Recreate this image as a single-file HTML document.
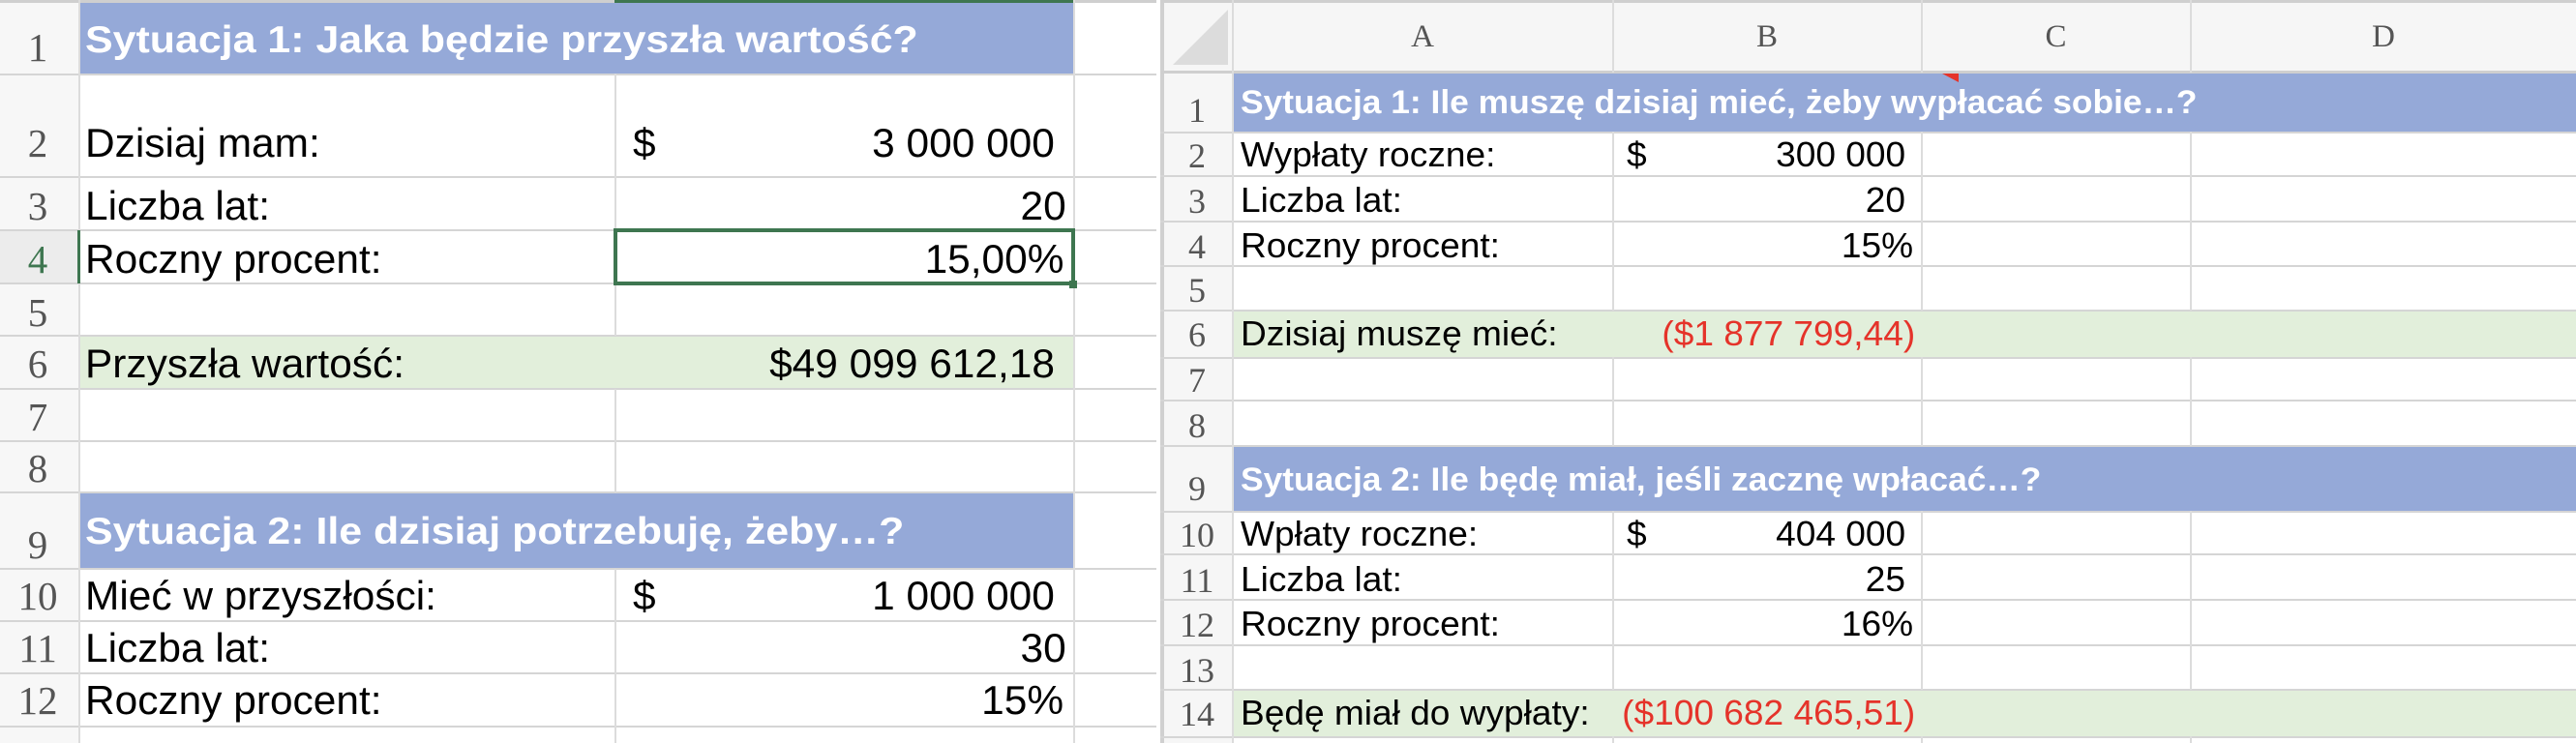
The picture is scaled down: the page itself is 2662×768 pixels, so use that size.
<!DOCTYPE html>
<html><head><meta charset="utf-8"><style>
*{margin:0;padding:0;box-sizing:border-box}
body{width:2662px;height:768px;overflow:hidden;background:#fff;position:relative;font-family:"Liberation Sans",Arial,sans-serif}
div{position:absolute}
.h{height:2px;background:#d5d5d5}
.v{width:2px;background:#dcdcdc}
.t{white-space:nowrap;line-height:1;color:#000}
.L{font-size:42px;transform:scaleX(1.01);transform-origin:left}
.LR{font-size:42px;transform:scaleX(1.01);transform-origin:right;text-align:right}
.R{font-size:36px;transform:scaleX(1.03);transform-origin:left}
.RR{font-size:36px;transform:scaleX(1.03);transform-origin:right;text-align:right}
.n{font-family:"Liberation Serif",serif;color:#555;text-align:center;line-height:1;white-space:nowrap}
.hd{font-weight:bold;color:#fff;white-space:nowrap;line-height:1}
.red{color:#e5332a}
</style></head><body>
<!-- LEFT SHEET -->
<div style="left:0;top:0;width:82px;height:768px;background:#f7f7f7"></div>
<div style="left:0;top:0;width:1195px;height:3px;background:#cfcfcf"></div>
<div style="left:635px;top:0;width:474px;height:4px;background:#3e7650"></div>
<div style="left:0;top:238px;width:82px;height:55px;background:#ececec"></div>
<div style="left:82px;top:3px;width:1027px;height:73px;background:#95a9d8"></div>
<div style="left:82px;top:509px;width:1027px;height:79px;background:#95a9d8"></div>
<div style="left:82px;top:347px;width:1027px;height:55px;background:#e2efdb"></div>
<div class="h" style="left:0;top:76px;width:1195px"></div>
<div class="h" style="left:0;top:182px;width:1195px"></div>
<div class="h" style="left:0;top:237px;width:1195px"></div>
<div class="h" style="left:0;top:292px;width:1195px"></div>
<div class="h" style="left:0;top:346px;width:1195px"></div>
<div class="h" style="left:0;top:401px;width:1195px"></div>
<div class="h" style="left:0;top:455px;width:1195px"></div>
<div class="h" style="left:0;top:508px;width:1195px"></div>
<div class="h" style="left:0;top:587px;width:1195px"></div>
<div class="h" style="left:0;top:641px;width:1195px"></div>
<div class="h" style="left:0;top:695px;width:1195px"></div>
<div class="h" style="left:0;top:750px;width:1195px"></div>
<div class="v" style="left:81px;top:0;height:768px"></div>
<div class="v" style="left:635px;top:76px;height:271px"></div>
<div class="v" style="left:635px;top:402px;height:107px"></div>
<div class="v" style="left:635px;top:588px;height:180px"></div>
<div class="v" style="left:1109px;top:0;height:768px"></div>
<div style="left:80px;top:238px;width:3px;height:55px;background:#3e7650"></div>
<div style="left:634px;top:236px;width:477px;height:59px;border:4px solid #3e7650"></div>
<div style="left:1105px;top:290px;width:8px;height:8px;background:#3e7650"></div>
<div class="n" style="left:0;width:78px;font-size:41px;top:29px">1</div>
<div class="n" style="left:0;width:78px;font-size:41px;top:128px">2</div>
<div class="n" style="left:0;width:78px;font-size:41px;top:193px">3</div>
<div class="n" style="left:0;width:78px;font-size:41px;top:248px;color:#3e7650">4</div>
<div class="n" style="left:0;width:78px;font-size:41px;top:303px">5</div>
<div class="n" style="left:0;width:78px;font-size:41px;top:356px">6</div>
<div class="n" style="left:0;width:78px;font-size:41px;top:411px">7</div>
<div class="n" style="left:0;width:78px;font-size:41px;top:464px">8</div>
<div class="n" style="left:0;width:78px;font-size:41px;top:543px">9</div>
<div class="n" style="left:0;width:78px;font-size:41px;top:596px">10</div>
<div class="n" style="left:0;width:78px;font-size:41px;top:650px">11</div>
<div class="n" style="left:0;width:78px;font-size:41px;top:704px">12</div>
<div class="hd" style="left:88px;top:22px;font-size:39px;transform:scaleX(1.1);transform-origin:left">Sytuacja 1: Jaka będzie przyszła wartość?</div>
<div class="hd" style="left:88px;top:530px;font-size:39px;transform:scaleX(1.1);transform-origin:left">Sytuacja 2: Ile dzisiaj potrzebuję, żeby…?</div>
<div class="t L" style="left:88px;top:127px">Dzisiaj mam:</div>
<div class="t L" style="left:654px;top:127px">$</div>
<div class="t LR" style="right:1572px;top:127px">3 000 000</div>
<div class="t L" style="left:88px;top:192px">Liczba lat:</div>
<div class="t LR" style="right:1560px;top:192px">20</div>
<div class="t L" style="left:88px;top:247px">Roczny procent:</div>
<div class="t LR" style="right:1563px;top:247px">15,00%</div>
<div class="t L" style="left:88px;top:355px">Przyszła wartość:</div>
<div class="t LR" style="right:1572px;top:355px">$49 099 612,18</div>
<div class="t L" style="left:88px;top:595px">Mieć w przyszłości:</div>
<div class="t L" style="left:654px;top:595px">$</div>
<div class="t LR" style="right:1572px;top:595px">1 000 000</div>
<div class="t L" style="left:88px;top:649px">Liczba lat:</div>
<div class="t LR" style="right:1560px;top:649px">30</div>
<div class="t L" style="left:88px;top:703px">Roczny procent:</div>
<div class="t LR" style="right:1563px;top:703px">15%</div>

<!-- RIGHT SHEET -->
<div style="left:1199px;top:0;width:4px;height:768px;background:#d0d0d0"></div>
<div style="left:1203px;top:0;width:1459px;height:74px;background:#f6f6f6"></div>
<div style="left:1203px;top:0;width:71px;height:768px;background:#f6f6f6"></div>
<div style="left:1199px;top:0;width:1463px;height:3px;background:#cfcfcf"></div>
<svg style="position:absolute;left:1212px;top:10px" width="58" height="58"><polygon points="57,0 57,57 0,57" fill="#dcdcdc"/></svg>
<div style="left:1274px;top:75px;width:1388px;height:61px;background:#95a9d8"></div>
<div style="left:1274px;top:461px;width:1388px;height:67px;background:#95a9d8"></div>
<div style="left:1274px;top:321px;width:1388px;height:48px;background:#e2efdb"></div>
<div style="left:1274px;top:713px;width:1388px;height:48px;background:#e2efdb"></div>
<div class="h" style="left:1199px;top:73px;width:1463px;height:3px;background:#cfcfcf"></div>
<div class="h" style="left:1199px;top:136px;width:1463px"></div>
<div class="h" style="left:1199px;top:181px;width:1463px"></div>
<div class="h" style="left:1199px;top:228px;width:1463px"></div>
<div class="h" style="left:1199px;top:274px;width:1463px"></div>
<div class="h" style="left:1199px;top:320px;width:1463px"></div>
<div class="h" style="left:1199px;top:369px;width:1463px"></div>
<div class="h" style="left:1199px;top:413px;width:1463px"></div>
<div class="h" style="left:1199px;top:460px;width:1463px"></div>
<div class="h" style="left:1199px;top:528px;width:1463px"></div>
<div class="h" style="left:1199px;top:572px;width:1463px"></div>
<div class="h" style="left:1199px;top:619px;width:1463px"></div>
<div class="h" style="left:1199px;top:666px;width:1463px"></div>
<div class="h" style="left:1199px;top:712px;width:1463px"></div>
<div class="h" style="left:1199px;top:761px;width:1463px"></div>
<div class="v" style="left:1273px;top:0;height:768px"></div>
<div class="v" style="left:1666px;top:0;height:75px"></div>
<div class="v" style="left:1985px;top:0;height:75px"></div>
<div class="v" style="left:2263px;top:0;height:75px"></div>
<div class="v" style="left:1666px;top:136px;height:185px"></div>
<div class="v" style="left:1985px;top:136px;height:185px"></div>
<div class="v" style="left:2263px;top:136px;height:185px"></div>
<div class="v" style="left:1666px;top:369px;height:92px"></div>
<div class="v" style="left:1985px;top:369px;height:92px"></div>
<div class="v" style="left:2263px;top:369px;height:92px"></div>
<div class="v" style="left:1666px;top:528px;height:185px"></div>
<div class="v" style="left:1985px;top:528px;height:185px"></div>
<div class="v" style="left:2263px;top:528px;height:185px"></div>
<div class="v" style="left:1666px;top:761px;height:7px"></div>
<div class="v" style="left:1985px;top:761px;height:7px"></div>
<div class="v" style="left:2263px;top:761px;height:7px"></div>
<svg style="position:absolute;left:2007px;top:76px" width="18" height="10"><polygon points="0,0 17,0 17,9" fill="#e5332a"/></svg>
<div class="n" style="left:1274px;width:392px;font-size:33px;top:22px">A</div>
<div class="n" style="left:1667px;width:318px;font-size:33px;top:22px">B</div>
<div class="n" style="left:1986px;width:277px;font-size:33px;top:22px">C</div>
<div class="n" style="left:2264px;width:398px;font-size:33px;top:22px">D</div>
<div class="n" style="left:1203px;width:68px;font-size:36px;top:96px">1</div>
<div class="n" style="left:1203px;width:68px;font-size:36px;top:143px">2</div>
<div class="n" style="left:1203px;width:68px;font-size:36px;top:190px">3</div>
<div class="n" style="left:1203px;width:68px;font-size:36px;top:237px">4</div>
<div class="n" style="left:1203px;width:68px;font-size:36px;top:282px">5</div>
<div class="n" style="left:1203px;width:68px;font-size:36px;top:328px">6</div>
<div class="n" style="left:1203px;width:68px;font-size:36px;top:375px">7</div>
<div class="n" style="left:1203px;width:68px;font-size:36px;top:422px">8</div>
<div class="n" style="left:1203px;width:68px;font-size:36px;top:487px">9</div>
<div class="n" style="left:1203px;width:68px;font-size:36px;top:535px">10</div>
<div class="n" style="left:1203px;width:68px;font-size:36px;top:582px">11</div>
<div class="n" style="left:1203px;width:68px;font-size:36px;top:628px">12</div>
<div class="n" style="left:1203px;width:68px;font-size:36px;top:675px">13</div>
<div class="n" style="left:1203px;width:68px;font-size:36px;top:720px">14</div>
<div class="hd" style="left:1282px;top:89px;font-size:34px;transform:scaleX(1.04);transform-origin:left">Sytuacja 1: Ile muszę dzisiaj mieć, żeby wypłacać sobie…?</div>
<div class="hd" style="left:1282px;top:479px;font-size:34px;transform:scaleX(1.04);transform-origin:left">Sytuacja 2: Ile będę miał, jeśli zacznę wpłacać…?</div>
<div class="t R" style="left:1282px;top:142px">Wypłaty roczne:</div>
<div class="t R" style="left:1681px;top:142px">$</div>
<div class="t RR" style="right:693px;top:142px">300 000</div>
<div class="t R" style="left:1282px;top:189px">Liczba lat:</div>
<div class="t RR" style="right:693px;top:189px">20</div>
<div class="t R" style="left:1282px;top:236px">Roczny procent:</div>
<div class="t RR" style="right:685px;top:236px">15%</div>
<div class="t R" style="left:1282px;top:327px">Dzisiaj muszę mieć:</div>
<div class="t RR red" style="right:683px;top:327px">($1 877 799,44)</div>
<div class="t R" style="left:1282px;top:534px">Wpłaty roczne:</div>
<div class="t R" style="left:1681px;top:534px">$</div>
<div class="t RR" style="right:693px;top:534px">404 000</div>
<div class="t R" style="left:1282px;top:581px">Liczba lat:</div>
<div class="t RR" style="right:693px;top:581px">25</div>
<div class="t R" style="left:1282px;top:627px">Roczny procent:</div>
<div class="t RR" style="right:685px;top:627px">16%</div>
<div class="t R" style="left:1282px;top:719px">Będę miał do wypłaty:</div>
<div class="t RR red" style="right:683px;top:719px">($100 682 465,51)</div>
</body></html>
